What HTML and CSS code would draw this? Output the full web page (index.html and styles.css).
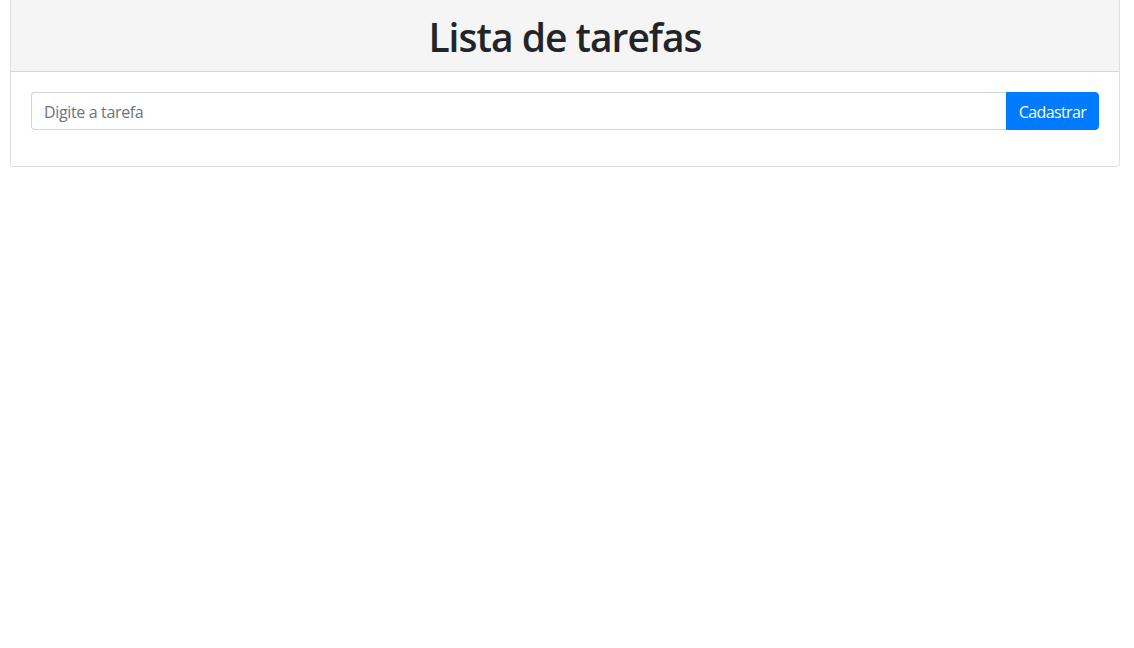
FILE: index.html
```html
<!DOCTYPE html>
<html lang="pt-BR">
<head>
<meta charset="utf-8">
<title>Lista de tarefas</title>
<link rel="stylesheet" href="styles.css">
</head>
<body>
<div class="card">
  <div class="card-header">
    <h1 class="title">Lista de tarefas</h1>
  </div>
  <div class="card-body">
    <form class="input-group">
      <input class="form-control" type="text" placeholder="Digite a tarefa">
      <button class="btn" type="button">Cadastrar</button>
    </form>
  </div>
</div>
</body>
</html>
```
FILE: styles.css
```css
* { box-sizing: border-box; }
html, body { margin: 0; padding: 0; background: #fff; }
body {
  font-family: "Open Sans", "Noto Sans", sans-serif;
  font-size: 16px;
  color: #212529;
}
.card {
  width: 1110px;
  margin: 0 0 0 10px;
  border: 1px solid rgba(0,0,0,.125);
  border-top: 0;
  border-radius: 0 0 4px 4px;
  background: #fff;
}
.card-header {
  background: rgba(0,0,0,.04);
  border-bottom: 1px solid rgba(0,0,0,.125);
  padding: 13px 20px 10px;
  text-align: center;
}
.title {
  margin: 0;
  font-size: 39px;
  font-weight: 600;
  line-height: 48px;
  letter-spacing: -1px;
  color: #212529;
}
.card-body { padding: 20px 20px 20px; }
.input-group {
  display: flex;
  margin: 0 0 16px;
}
.form-control {
  flex: 1;
  height: 38px;
  padding: 7px 12px 5px;
  font: inherit;
  font-size: 16px;
  letter-spacing: -0.35px;
  color: #495057;
  border: 1px solid #ced4da;
  border-right: 0;
  border-radius: 4px 0 0 4px;
  outline: none;
}
.form-control::placeholder { color: #6c757d; }
.btn {
  height: 38px;
  width: 93px;
  padding: 7px 0 5px;
  font: inherit;
  font-size: 16px;
  letter-spacing: -0.6px;
  color: #fff;
  background: #007bff;
  border: 1px solid #007bff;
  border-radius: 0 4px 4px 0;
}
```
